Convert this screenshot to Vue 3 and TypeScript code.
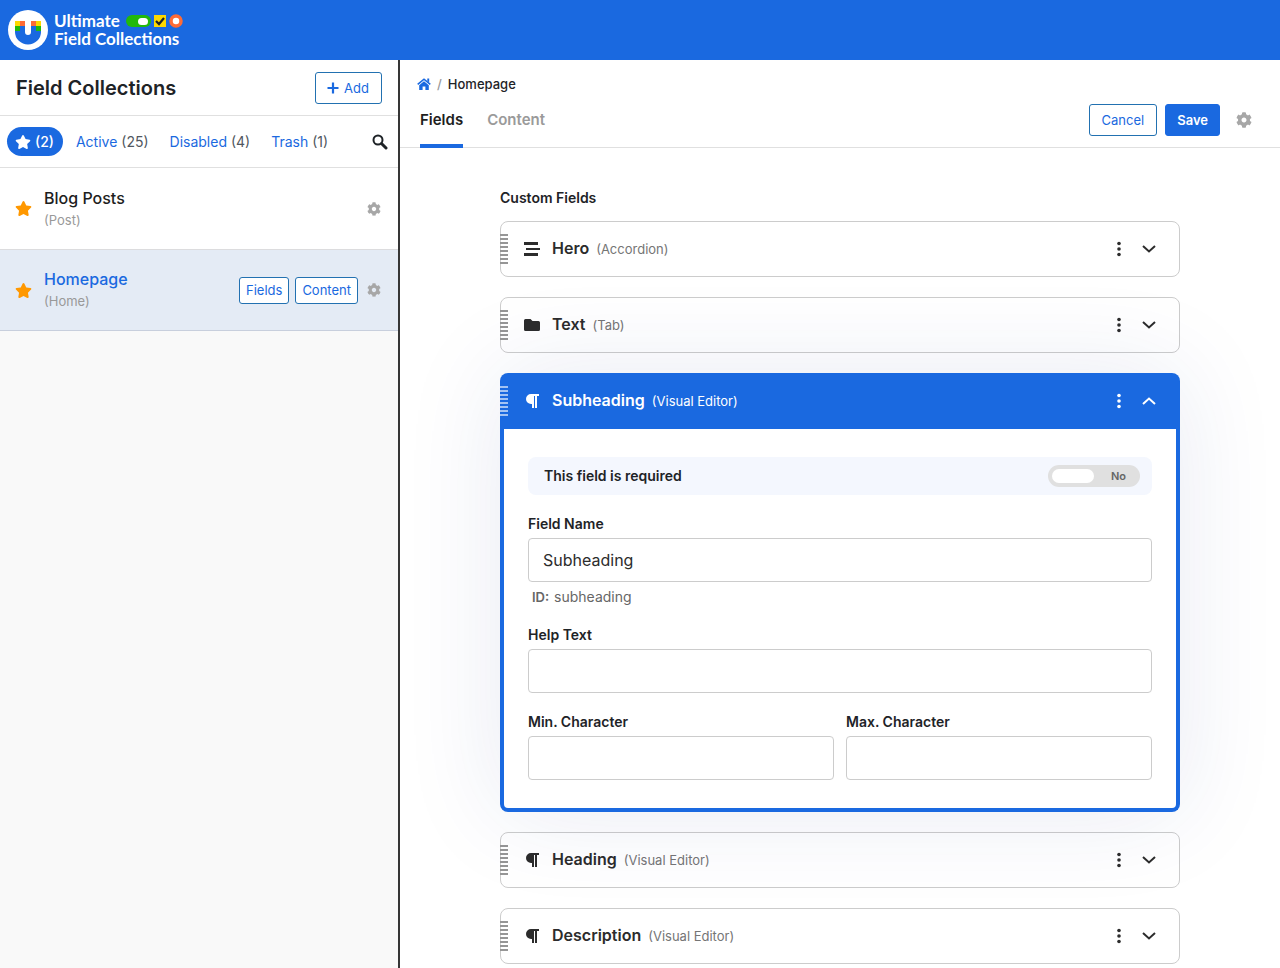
<script setup lang="ts">
import { ref } from 'vue'

interface Collection {
  name: string
  location: string
}

interface Field {
  name: string
  type: string
  icon: 'accordion' | 'tab' | 'editor'
}

const collections: Collection[] = [
  { name: 'Blog Posts', location: 'Post' },
  { name: 'Homepage', location: 'Home' },
]

const filters = [
  { label: 'Active', count: 25 },
  { label: 'Disabled', count: 4 },
  { label: 'Trash', count: 1 },
]

const fields = ref<Field[]>([
  { name: 'Hero', type: 'Accordion', icon: 'accordion' },
  { name: 'Text', type: 'Tab', icon: 'tab' },
  { name: 'Subheading', type: 'Visual Editor', icon: 'editor' },
  { name: 'Heading', type: 'Visual Editor', icon: 'editor' },
  { name: 'Description', type: 'Visual Editor', icon: 'editor' },
])

const selected = ref('Homepage')
const openIndex = ref(2)
const required = ref(false)
const helpText = ref('')
const minChars = ref('')
const maxChars = ref('')

const toggle = (index: number) => {
  openIndex.value = openIndex.value === index ? -1 : index
}

const starPath =
  'M259.3 17.8L194 150.2 47.9 171.5c-26.2 3.8-36.7 36.1-17.7 54.6l105.7 103-25 145.5c-4.5 26.3 23.2 46 46.4 33.7L288 439.6l130.7 68.7c23.2 12.2 50.9-7.4 46.4-33.7l-25-145.5 105.7-103c19-18.5 8.5-50.8-17.7-54.6L382 150.2 316.7 17.8c-11.7-23.6-45.6-23.9-57.4 0z'
const gearPath =
  'M487.4 315.7l-42.6-24.6c4.3-23.2 4.3-47 0-70.2l42.6-24.6c4.9-2.8 7.1-8.6 5.5-14-11.1-35.6-30-67.8-54.7-94.6-3.8-4.1-10-5.1-14.8-2.3L380.8 110c-17.9-15.4-38.5-27.3-60.8-35.1V25.8c0-5.6-3.9-10.5-9.4-11.7-36.7-8.2-74.3-7.8-109.2 0-5.5 1.2-9.4 6.1-9.4 11.7V75c-22.2 7.9-42.8 19.8-60.8 35.1L88.7 85.5c-4.9-2.8-11-1.9-14.8 2.3-24.7 26.7-43.6 58.9-54.7 94.6-1.7 5.4.6 11.2 5.5 14L67.3 221c-4.3 23.2-4.3 47 0 70.2l-42.6 24.6c-4.9 2.8-7.1 8.6-5.5 14 11.1 35.6 30 67.8 54.7 94.6 3.8 4.1 10 5.1 14.8 2.3l42.6-24.6c17.9 15.4 38.5 27.3 60.8 35.1v49.2c0 5.6 3.9 10.5 9.4 11.7 36.7 8.2 74.3 7.8 109.2 0 5.5-1.2 9.4-6.1 9.4-11.7v-49.2c22.2-7.9 42.8-19.8 60.8-35.1l42.6 24.6c4.9 2.8 11 1.9 14.8-2.3 24.7-26.7 43.6-58.9 54.7-94.6 1.5-5.5-.7-11.3-5.6-14.1zM256 336c-44.1 0-80-35.9-80-80s35.9-80 80-80 80 35.9 80 80-35.9 80-80 80z'
</script>

<template>
  <div class="app">
    <header class="topbar">
      <svg class="logo" viewBox="0 0 40 40" aria-hidden="true">
        <circle cx="20" cy="20" r="20" fill="#fff" />
        <path d="M7 16h10v6a3 3 0 0 0 6 0v-6h10v6a13 12.500 0 0 1-26 0z" fill="#1a69e0" />
        <path d="M7 11h5v5H7z" fill="#fdd800" />
        <path d="M12 11h5v5h-5z" fill="#ff6b35" />
        <path d="M7 16h5v5H7z" fill="#22b90b" />
        <path d="M23 11h5v5h-5z" fill="#ff6b35" />
        <path d="M28 11h5v5h-5z" fill="#fdd800" />
        <path d="M28 16h5v5h-5z" fill="#22b90b" />
      </svg>
      <div class="brand">
        <div class="brand-line">
          <span>Ultimate</span>
          <svg class="brand-marks" viewBox="0 0 58 14" aria-hidden="true">
            <rect x="1" y="1" width="25" height="12" rx="6" fill="#22b90b" />
            <rect x="13" y="4" width="10" height="7" rx="3.500" fill="#fff" />
            <rect x="29" y="1" width="12" height="12" fill="#fdd800" />
            <path d="M31 7l3 3 5-6" fill="none" stroke="#1f2426" stroke-width="2.200" />
            <circle cx="51" cy="7" r="5" fill="#fff" stroke="#ff6b35" stroke-width="3.500" />
          </svg>
        </div>
        <span>Field Collections</span>
      </div>
    </header>

    <div class="body">
      <aside class="sidebar">
        <div class="side-title">
          <h1>Field Collections</h1>
          <button class="btn add" type="button">
            <svg viewBox="0 0 12 12" width="12" height="12" aria-hidden="true">
              <path d="M6 0.500v11M0.500 6h11" stroke="currentColor" stroke-width="2.200" />
            </svg>
            Add
          </button>
        </div>

        <nav class="filters" aria-label="Collection filters">
          <a class="pill" href="#" aria-label="Starred (2)">
            <svg viewBox="0 0 576 512" width="16" height="14" aria-hidden="true"><path :d="starPath" fill="currentColor" /></svg>
            (2)
          </a>
          <a v-for="filter in filters" :key="filter.label" href="#">
            {{ filter.label }} <span>({{ filter.count }})</span>
          </a>
          <button class="icon-btn search" type="button" aria-label="Search">
            <svg viewBox="0 0 16 16" width="16" height="16" aria-hidden="true">
              <circle cx="6" cy="6" r="4.500" fill="none" stroke="currentColor" stroke-width="2" />
              <path d="M9.500 9.500l4.500 4.500" stroke="currentColor" stroke-width="3" stroke-linecap="round" />
            </svg>
          </button>
        </nav>

        <ul class="collections">
          <li
            v-for="item in collections"
            :key="item.name"
            :class="{ selected: item.name === selected }"
          >
            <svg class="star" viewBox="0 0 576 512" width="17" height="15" aria-hidden="true"><path :d="starPath" fill="currentColor" /></svg>
            <div class="collection-text">
              <a href="#" @click.prevent="selected = item.name">{{ item.name }}</a>
              <span>({{ item.location }})</span>
            </div>
            <div v-if="item.name === selected" class="row-actions">
              <button class="btn small" type="button">Fields</button>
              <button class="btn small" type="button">Content</button>
            </div>
            <button class="icon-btn gear" type="button" :aria-label="`${item.name} settings`">
              <svg viewBox="0 0 512 512" width="14" height="14" aria-hidden="true"><path :d="gearPath" fill="currentColor" /></svg>
            </button>
          </li>
        </ul>
      </aside>

      <main class="main">
        <div class="main-head">
          <nav class="crumbs" aria-label="Breadcrumb">
            <a href="#" aria-label="Home">
              <svg viewBox="0 0 14 12" width="14" height="12" aria-hidden="true">
                <path d="M0.700 6.400L7 1.200l6.300 5.200" fill="none" stroke="currentColor" stroke-width="1.600" />
                <path d="M10.300 0.500h1.900v4l-1.900-1.600z" fill="currentColor" />
                <path d="M7 3.300l4.800 4V12H8.400V8.600H5.600V12H2.200V7.300z" fill="currentColor" />
              </svg>
            </a>
            <span class="slash">/</span>
            <span>Homepage</span>
          </nav>
          <div class="toolbar">
            <div class="tabs" role="tablist">
              <button class="tab active" type="button" role="tab" aria-selected="true">Fields</button>
              <button class="tab" type="button" role="tab" aria-selected="false">Content</button>
            </div>
            <div class="actions">
              <button class="btn" type="button">Cancel</button>
              <button class="btn primary" type="button">Save</button>
              <button class="icon-btn gear" type="button" aria-label="Collection settings">
                <svg viewBox="0 0 512 512" width="16" height="16" aria-hidden="true"><path :d="gearPath" fill="currentColor" /></svg>
              </button>
            </div>
          </div>
        </div>

        <section class="canvas">
          <h2>Custom Fields</h2>
          <article
            v-for="(field, index) in fields"
            :key="index"
            class="card"
            :class="{ open: index === openIndex }"
          >
            <header class="card-head">
              <span class="grip"></span>
              <svg class="type-icon" viewBox="0 0 16 16" width="16" height="16" aria-hidden="true">
                <path v-if="field.icon === 'accordion'" d="M0 1h14v3H0zM2 7h14v2H2zM0 12h14v3H0z" fill="currentColor" />
                <path v-else-if="field.icon === 'tab'" d="M1.500 2H6.500L8.500 4H14.500Q16 4 16 5.500V12.500Q16 14 14.500 14H1.500Q0 14 0 12.500V3.500Q0 2 1.500 2z" fill="currentColor" />
                <path v-else d="M7 1H15v2h-2v12h-2V3H10v12H8V11H7a5 5 0 0 1 0-10z" fill="currentColor" />
              </svg>
              <h3>{{ field.name }}</h3>
              <span class="type">({{ field.type }})</span>
              <button class="icon-btn more" type="button" :aria-label="`${field.name} options`">
                <svg viewBox="0 0 4 16" width="4" height="16" aria-hidden="true">
                  <circle cx="2" cy="2.500" r="1.800" fill="currentColor" />
                  <circle cx="2" cy="8" r="1.800" fill="currentColor" />
                  <circle cx="2" cy="13.500" r="1.800" fill="currentColor" />
                </svg>
              </button>
              <button
                class="icon-btn chevron"
                type="button"
                :aria-expanded="index === openIndex"
                :aria-label="`Toggle ${field.name}`"
                @click="toggle(index)"
              >
                <svg viewBox="0 0 14 8" width="14" height="8" aria-hidden="true">
                  <path :d="index === openIndex ? 'M1 7l6-5.500L13 7' : 'M1 1l6 5.500L13 1'" fill="none" stroke="currentColor" stroke-width="2" />
                </svg>
              </button>
            </header>

            <div v-if="index === openIndex" class="card-body">
              <div class="required">
                <label for="required">This field is required</label>
                <div class="switch">
                  <input id="required" v-model="required" type="checkbox" role="switch" />
                  <span>{{ required ? 'Yes' : 'No' }}</span>
                </div>
              </div>

              <div class="form-row">
                <label for="field-name">Field Name</label>
                <input id="field-name" v-model="field.name" type="text" />
                <p class="field-id"><b>ID:</b> {{ field.name.toLowerCase() }}</p>
              </div>
              <div class="form-row">
                <label for="help-text">Help Text</label>
                <input id="help-text" v-model="helpText" type="text" />
              </div>
              <div class="form-pair">
                <div class="form-row">
                  <label for="min-chars">Min. Character</label>
                  <input id="min-chars" v-model="minChars" type="text" />
                </div>
                <div class="form-row">
                  <label for="max-chars">Max. Character</label>
                  <input id="max-chars" v-model="maxChars" type="text" />
                </div>
              </div>
            </div>
          </article>
        </section>
      </main>
    </div>
  </div>
</template>

<style>
body {
  margin: 0;
  overflow: hidden;
}
</style>

<style scoped>
.app {
  height: 100vh;
  display: flex;
  flex-direction: column;
  font-family: Inter, "Liberation Sans", sans-serif;
  font-size: 13px;
  line-height: 20px;
  color: #1e2327;
  background: #fff;
}
.app *,
.app *::before {
  box-sizing: border-box;
}
a {
  color: #1a69e0;
  text-decoration: none;
}
button,
input {
  font-family: inherit;
  margin: 0;
}
button {
  cursor: pointer;
}
svg {
  display: block;
  flex: none;
}
h1,
h2,
h3,
p,
ul {
  margin: 0;
  padding: 0;
}

.topbar {
  flex: none;
  height: 60px;
  display: flex;
  align-items: center;
  gap: 6px;
  padding: 0 8px;
  background: #1a69e0;
  color: #fff;
}
.logo {
  width: 40px;
  height: 40px;
}
.brand {
  font-family: Lato, sans-serif;
  font-size: 17px;
  line-height: 18px;
  font-weight: 700;
}
.brand-line {
  display: flex;
  align-items: center;
  gap: 5px;
}
.brand-marks {
  width: 58px;
  height: 14px;
}

.body {
  flex: 1;
  min-height: 0;
  display: flex;
}
.sidebar {
  flex: none;
  width: 400px;
  box-sizing: border-box;
  border-right: 2px solid #363636;
  background: #f9f9f9;
}
.side-title,
.filters {
  display: flex;
  align-items: center;
  background: #fff;
  border-bottom: 1px solid #e0e0e0;
}
.side-title {
  height: 56px;
  justify-content: space-between;
  padding: 0 16px;
}
h1 {
  font-size: 20px;
  line-height: 28px;
  font-weight: 600;
}
.btn {
  height: 32px;
  padding: 0 12px;
  border: 1px solid #2271b1;
  border-radius: 3px;
  background: #fff;
  color: #1a69e0;
  font-size: 13px;
  line-height: 20px;
}
.btn.primary {
  background: #1a69e0;
  border-color: #1a69e0;
  color: #fff;
  font-weight: 600;
}
.btn.small {
  height: 27px;
  padding: 0 6px;
}
.btn.add {
  display: flex;
  align-items: center;
  gap: 5px;
  padding: 0 12px 0 11px;
}
.filters {
  height: 52px;
  gap: 21px;
  padding: 0 10px 0 7px;
  font-size: 14px;
}
.filters a span {
  color: #50575e;
}
.filters .pill {
  display: flex;
  align-items: center;
  gap: 4px;
  height: 29px;
  padding: 0 9px 0 8px;
  margin-right: -8px;
  border-radius: 15px;
  background: #1a69e0;
  color: #fff;
  font-weight: 500;
}
.icon-btn {
  display: flex;
  align-items: center;
  justify-content: center;
  padding: 0;
  border: 0;
  background: none;
  color: inherit;
}
.search {
  margin-left: auto;
}
.gear {
  color: #a7a7a7;
}
.collections {
  list-style: none;
}
.collections li {
  height: 82px;
  display: flex;
  align-items: center;
  padding: 0 17px 0 15px;
  background: #fff;
  border-bottom: 1px solid #dcdcde;
}
.collections li.selected {
  height: 81px;
  background: #e4ebf5;
  border-color: #c8cfdd;
}
.star {
  color: #ff9800;
}
.collection-text {
  flex: 1;
  margin-left: 12px;
  padding-bottom: 2px;
}
.collection-text a {
  display: block;
  font-size: 16px;
  line-height: 24px;
  font-weight: 500;
  color: #1e1e1e;
}
.selected .collection-text a {
  color: #1a69e0;
}
.collection-text span {
  display: block;
  color: #999;
}
.row-actions {
  display: flex;
  gap: 6px;
  margin-right: 9px;
}

.main {
  flex: 1;
  min-width: 0;
  display: flex;
  flex-direction: column;
}
.main-head {
  flex: none;
  padding-top: 14px;
  border-bottom: 1px solid #e0e0e0;
}
.crumbs {
  display: flex;
  align-items: center;
  gap: 6px;
  padding-left: 17px;
  font-weight: 500;
}
.slash {
  color: #999;
}
.toolbar {
  display: flex;
  justify-content: space-between;
  align-items: flex-start;
  height: 53px;
  padding: 0 28px 0 20px;
}
.tabs {
  display: flex;
  gap: 24px;
}
.tab {
  height: 54px;
  padding: 2px 0 0;
  border: 0;
  border-bottom: 4px solid transparent;
  background: none;
  color: #9a9a9a;
  font-size: 15px;
  line-height: 20px;
  font-weight: 600;
}
.tab.active {
  color: #1e1e1e;
  border-color: #1a69e0;
}
.actions {
  display: flex;
  align-items: center;
  gap: 8px;
  padding-top: 10px;
}
.actions .primary {
  padding: 0 11px;
}
.actions .gear {
  margin-left: 8px;
}

.canvas {
  flex: 1;
  min-height: 0;
  overflow: hidden;
  padding: 40px 100px 0;
}
h2 {
  font-size: 14px;
  line-height: 20px;
  font-weight: 600;
  margin-bottom: 13px;
}
.card {
  margin-bottom: 20px;
  border: 1px solid #ccc;
  border-radius: 8px;
}
.card-head {
  height: 54px;
  display: flex;
  align-items: center;
  padding-right: 20px;
  color: #2c2c2c;
}
.grip {
  width: 8px;
  height: 30px;
  margin: 0 16px 0 -1px;
  background: repeating-linear-gradient(#969696 0 2px, transparent 2px 4px);
}
h3 {
  margin: 0 7px 0 12px;
  padding-bottom: 2px;
  font-size: 16px;
  line-height: 24px;
  font-weight: 600;
}
.type {
  flex: 1;
  color: #757575;
}
.more {
  width: 20px;
  height: 24px;
}
.chevron {
  width: 20px;
  height: 24px;
  margin-left: 10px;
}
.card.open {
  position: relative;
  border: 0;
  background: #fff;
  box-shadow: 0 0 100px rgba(26, 50, 140, 0.1);
}
.open .card-head {
  height: 56px;
  padding-right: 21px;
  border-radius: 8px 8px 0 0;
  background: #1a69e0;
  color: #fff;
}
.open .grip {
  margin-left: 0;
  background: repeating-linear-gradient(#a3c3f3 0 2px, transparent 2px 4px);
}
.open .type {
  color: #fff;
}
.card-body {
  padding: 28px 24px;
  border: 4px solid #1a69e0;
  border-top: 0;
  border-radius: 0 0 8px 8px;
}
.required {
  display: flex;
  align-items: center;
  justify-content: space-between;
  height: 38px;
  margin-bottom: 19px;
  padding: 0 12px 0 16px;
  border-radius: 8px;
  background: #f4f7fe;
  font-size: 14px;
  font-weight: 600;
}
.switch {
  display: grid;
  align-items: center;
  width: 92px;
  height: 22px;
}
.switch input {
  grid-area: 1 / 1;
  appearance: none;
  display: flex;
  width: 92px;
  height: 22px;
  padding: 4px;
  border-radius: 11px;
  background: #e0e0e0;
}
.switch input::before {
  content: "";
  width: 42px;
  border-radius: 7px;
  background: #fff;
}
.switch input:checked {
  justify-content: flex-end;
  background: #a3c3f3;
}
.switch span {
  grid-area: 1 / 1;
  justify-self: end;
  margin-right: 14px;
  color: #666;
  font-size: 11px;
  pointer-events: none;
}
.switch input:checked + span {
  justify-self: start;
  margin-left: 14px;
}
.form-row {
  flex: 1;
  display: flex;
  flex-direction: column;
}
.form-row + .form-row {
  margin-top: 18px;
}
.form-pair {
  display: flex;
  gap: 12px;
  margin-top: 19px;
}
.form-pair .form-row {
  margin-top: 0;
}
.form-row label {
  margin-bottom: 4px;
  font-size: 14px;
  line-height: 20px;
  font-weight: 600;
}
.form-row input {
  width: 100%;
  height: 44px;
  padding: 0 14px;
  border: 1px solid #ccc;
  border-radius: 4px;
  background: #fff;
  color: #2c2c2c;
  font-size: 16px;
}
.field-id {
  padding: 5px 4px 0;
  color: #666;
  font-size: 14px;
}
.field-id b {
  margin-right: 1px;
  font-size: 13px;
  font-weight: 600;
}
</style>
